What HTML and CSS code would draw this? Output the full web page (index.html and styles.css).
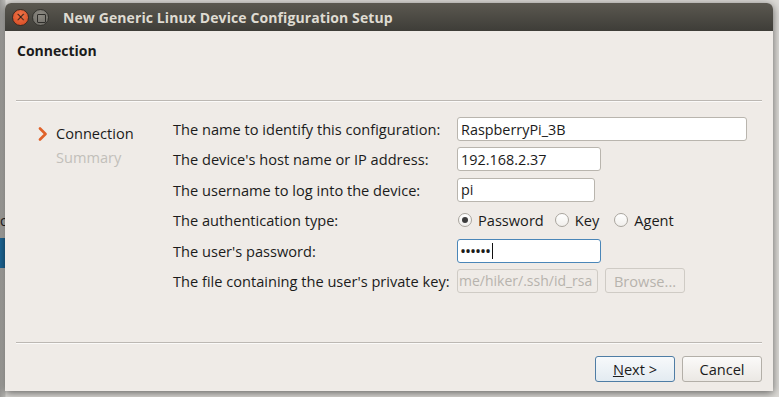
FILE: index.html
```html
<!DOCTYPE html>
<html lang="en">
<head>
    <meta charset="UTF-8">
    <title>New Generic Linux Device Configuration Setup</title>
    <link rel="stylesheet" href="styles.css">
</head>
<body>
    <div class="desktop">
        <div class="backdrop-text">ol</div>
        <div class="backdrop-select"></div>

        <div class="window">
            <div class="titlebar">
                <span class="btn-close">&#215;</span>
                <span class="btn-min"></span>
                <span class="title">New Generic Linux Device Configuration Setup</span>
            </div>

            <div class="window-body">
                <div class="page-header">Connection</div>
                <div class="separator"></div>

                <div class="page-main">
                    <ul class="steps">
                        <li class="step current">
                            <svg class="step-arrow" width="10" height="14" viewBox="0 0 10 14">
                                <path d="M2 1.5 L7.5 7 L2 12.5" fill="none" stroke="#e0622a" stroke-width="2.6" stroke-linecap="round" stroke-linejoin="round"/>
                            </svg>
                            Connection
                        </li>
                        <li class="step">Summary</li>
                    </ul>

                    <div class="form">
                        <label>The name to identify this configuration:</label>
                        <div class="field"><input class="input wide" type="text" value="RaspberryPi_3B"></div>

                        <label>The device's host name or IP address:</label>
                        <div class="field"><input class="input mid" type="text" value="192.168.2.37"></div>

                        <label>The username to log into the device:</label>
                        <div class="field"><input class="input short" type="text" value="pi"></div>

                        <label>The authentication type:</label>
                        <div class="field radios">
                            <span class="radio checked"></span><span class="radio-label">Password</span>
                            <span class="radio"></span><span class="radio-label key">Key</span>
                            <span class="radio"></span><span class="radio-label">Agent</span>
                        </div>

                        <label>The user's password:</label>
                        <div class="field"><div class="input mid focused"><span class="dots">&#8226;&#8226;&#8226;&#8226;&#8226;&#8226;</span><span class="caret"></span></div></div>

                        <label>The file containing the user's private key:</label>
                        <div class="field">
                            <div class="input keyfile disabled">me/hiker/.ssh/id_rsa</div>
                            <div class="button disabled browse">Browse...</div>
                        </div>
                    </div>
                </div>

                <div class="separator"></div>

                <div class="page-footer">
                    <div class="button default"><u>N</u>ext &gt;</div>
                    <div class="button">Cancel</div>
                </div>
            </div>
        </div>
    </div>
</body>
</html>
```

FILE: styles.css
```css
* {
    box-sizing: border-box;
}

body {
    margin: 0;
    width: 779px;
    height: 397px;
    overflow: hidden;
    font-family: 'Open Sans', 'DejaVu Sans', sans-serif;
    font-size: 14.6px;
    color: #1b1b1b;
    background: #dcdad6;
}

.desktop {
    position: relative;
    height: 397px;
    background: linear-gradient(90deg, #9c9b98 0px, #bdbcb8 5px, #dcdad6 6px);
}

.backdrop-text {
    position: absolute;
    left: 0;
    top: 211px;
    font-size: 14px;
    color: #1f1f1f;
}

.backdrop-select {
    position: absolute;
    left: 0;
    top: 238px;
    width: 5px;
    height: 30px;
    background: #1d6797;
}

.window {
    position: absolute;
    left: 5px;
    top: 3px;
    width: 768px;
    height: 388px;
    display: flex;
    flex-direction: column;
    border-radius: 6px 6px 0 0;
    background: #efebe7;
    box-shadow: 0 2px 8px rgba(0, 0, 0, 0.55);
}

/* title bar */
.titlebar {
    height: 28px;
    display: flex;
    align-items: center;
    padding-left: 7px;
    border-radius: 6px 6px 0 0;
    background: linear-gradient(#5b5850, #3e3d38);
}

.btn-close {
    width: 17px;
    height: 17px;
    border-radius: 50%;
    background: radial-gradient(circle at 50% 35%, #f0774b, #d3461f);
    border: 1px solid #3a2a22;
    color: #3b1f14;
    font-family: 'DejaVu Sans', sans-serif;
    font-size: 12px;
    line-height: 14px;
    text-align: center;
}

.btn-min {
    width: 17px;
    height: 17px;
    margin-left: 3px;
    border-radius: 50%;
    background: radial-gradient(circle at 50% 35%, #8e8b84, #6b6963);
    border: 1px solid #33322e;
    position: relative;
}

.btn-min::after {
    content: "";
    position: absolute;
    left: 4px;
    top: 4px;
    width: 7px;
    height: 7px;
    border: 1px solid #2e2d2a;
    border-radius: 1px;
}

.title {
    margin-left: 14px;
    font-weight: bold;
    font-size: 14px;
    color: #dfdbd2;
    letter-spacing: 0.1px;
}

/* body */
.window-body {
    flex: 1;
    display: flex;
    flex-direction: column;
    padding: 0 11px 0 11px;
}

.page-header {
    height: 69px;
    padding: 10px 0 0 1px;
    font-weight: bold;
    font-size: 14px;
}

.separator {
    height: 2px;
    border-top: 1px solid #bcb8b3;
    border-bottom: 1px solid #fbfaf9;
}

.page-main {
    height: 240px;
    display: flex;
    padding-top: 15px;
}

.steps {
    list-style: none;
    margin: 0;
    padding: 6px 0 0 22px;
    width: 157px;
}

.step {
    position: relative;
    height: 24px;
    padding-left: 18px;
    color: #c2bfba;
}

.step.current {
    color: #1b1b1b;
}

.step-arrow {
    position: absolute;
    left: 0;
    top: 4px;
}

.form {
    display: grid;
    grid-template-columns: 284px 1fr;
    grid-auto-rows: 24px;
    row-gap: 6.4px;
    align-items: center;
}

.form label {
    color: #1b1b1b;
}

.field {
    display: flex;
    align-items: center;
    gap: 7px;
}

.input {
    height: 24px;
    padding: 0 3px;
    font-family: inherit;
    font-size: 14.4px;
    color: #1b1b1b;
    background: #ffffff;
    border: 1px solid #b9b5ae;
    border-radius: 3px;
    display: flex;
    align-items: center;
    outline: none;
}

.input.wide {
    width: 290px;
}

.input.mid {
    width: 144px;
}

.input.short {
    width: 138px;
}

.input.focused {
    border-color: #4a86b8;
    padding-left: 2px;
}

.dots {
    font-size: 16px;
    letter-spacing: -1px;
}

.caret {
    width: 1px;
    height: 16px;
    margin-left: 2px;
    background: #111;
}

.input.keyfile {
    width: 141px;
    overflow: hidden;
    white-space: nowrap;
    padding: 0 1px;
    font-size: 14px;
}

.disabled {
    color: #b7b3ad;
    background: #efebe7;
    border-color: #cfcbc5;
}

.radios {
    gap: 0;
}

.radio {
    width: 14px;
    height: 14px;
    margin-left: 1px;
    border-radius: 50%;
    border: 1px solid #a9a59e;
    background: linear-gradient(#ffffff, #f1efec);
    position: relative;
}

.radio.checked::after {
    content: "";
    position: absolute;
    left: 3px;
    top: 3px;
    width: 6px;
    height: 6px;
    border-radius: 50%;
    background: #3c3c3c;
}

.radio-label {
    margin: 0 10px 0 6px;
}

.radio-label.key {
    margin-right: 14px;
}

.button {
    height: 26px;
    width: 80px;
    display: flex;
    align-items: center;
    justify-content: center;
    border: 1px solid #b3afa8;
    border-radius: 3px;
    background: linear-gradient(#fbfaf9, #ebe8e4);
    color: #1b1b1b;
}

.button.default {
    border-color: #4f7da5;
    background: linear-gradient(#f7f9fb, #e3ebf1);
}

.button.browse {
    width: 80px;
    height: 25px;
    background: #efebe7;
    color: #b7b3ad;
    border-color: #cfcbc5;
}

.page-footer {
    display: flex;
    justify-content: flex-end;
    gap: 7px;
    padding-top: 12px;
    padding-right: 0;
}
```
